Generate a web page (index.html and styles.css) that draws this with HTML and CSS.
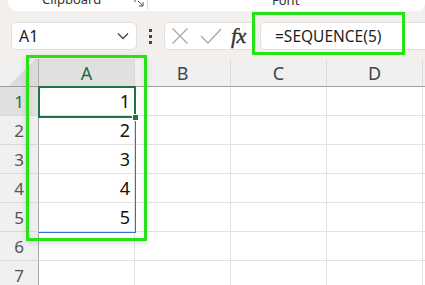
FILE: index.html
```html
<!DOCTYPE html>
<html>
<head>
<meta charset="utf-8">
<link rel="stylesheet" href="styles.css">
</head>
<body>
<div class="ribbon">
  <div class="group group-clip">
    <span class="group-label">Clipboard</span>
    <svg class="launcher" width="10" height="10" viewBox="0 0 10 10"><path d="M1 1h4M1 1v4M4 4l5 5M9 5v4H5" stroke="#555" stroke-width="1" fill="none"/></svg>
  </div>
  <div class="group group-font">
    <span class="group-label">Font</span>
  </div>
</div>

<div class="formula-row">
  <div class="namebox">
    <span class="ref">A1</span>
    <svg width="12" height="8" viewBox="0 0 12 8"><path d="M1 1.5l5 5 5-5" stroke="#444" stroke-width="1.3" fill="none"/></svg>
  </div>
  <div class="dots"><i></i><i></i><i></i></div>
  <div class="fbuttons">
    <svg width="18" height="18" viewBox="0 0 18 18"><path d="M1.5 1.5l15 15M16.5 1.5l-15 15" stroke="#a8a8a8" stroke-width="1.3" fill="none"/></svg>
    <svg width="22" height="18" viewBox="0 0 22 18"><path d="M1 9l7 7L21 2" stroke="#a8a8a8" stroke-width="1.3" fill="none"/></svg>
    <span class="fx">fx</span>
  </div>
  <div class="finput">=SEQUENCE(5)</div>
  <div class="hl hl-formula"></div>
</div>

<div class="sheet">
  <div class="grid">
    <div class="corner"></div>
    <div class="ch sel">A</div><div class="ch">B</div><div class="ch">C</div><div class="ch">D</div><div class="ch"></div>

    <div class="rh sel">1</div><div class="c num">1</div><div class="c"></div><div class="c"></div><div class="c"></div><div class="c"></div>
    <div class="rh">2</div><div class="c num">2</div><div class="c"></div><div class="c"></div><div class="c"></div><div class="c"></div>
    <div class="rh">3</div><div class="c num">3</div><div class="c"></div><div class="c"></div><div class="c"></div><div class="c"></div>
    <div class="rh">4</div><div class="c num">4</div><div class="c"></div><div class="c"></div><div class="c"></div><div class="c"></div>
    <div class="rh">5</div><div class="c num">5</div><div class="c"></div><div class="c"></div><div class="c"></div><div class="c"></div>
    <div class="rh">6</div><div class="c"></div><div class="c"></div><div class="c"></div><div class="c"></div><div class="c"></div>
    <div class="rh">7</div><div class="c"></div><div class="c"></div><div class="c"></div><div class="c"></div><div class="c"></div>
  </div>
  <div class="spill"></div>
  <div class="active"><span class="handle"></span></div>
  <div class="hl hl-col"></div>
</div>
</body>
</html>
```

FILE: styles.css
```css
* { box-sizing: border-box; }
html, body { margin: 0; padding: 0; }
body {
  width: 425px;
  height: 285px;
  overflow: hidden;
  background: #f3efec;
  font-family: "Noto Sans", "Open Sans", sans-serif;
  position: relative;
}

.ribbon {
  margin-left: 8px;
  height: 11px;
  background: #ffffff;
  border-radius: 0 0 8px 8px;
  display: flex;
  overflow: hidden;
}
.group {
  display: flex;
  align-items: flex-end;
  padding-bottom: 3px;
}
.group-clip {
  width: 140px;
  padding-left: 34px;
  border-right: 1px solid #dcdcdc;
  margin-bottom: 1px;
}
.group-label {
  font-size: 13px;
  line-height: 13px;
  color: #333;
  height: 7px;
  display: block;
  position: relative;
  top: -7px;
}
.launcher { margin-left: 33px; }
.group-font { padding-left: 124px; }

.formula-row {
  position: relative;
  display: flex;
  align-items: center;
  padding: 0 0 0 11px;
  margin-top: 11px;
  height: 28px;
}
.namebox {
  width: 126px;
  height: 28px;
  background: #fff;
  border: 1px solid #e3dfdc;
  border-radius: 5px;
  display: flex;
  align-items: center;
  justify-content: space-between;
  padding: 0 7px 0 7px;
}
.ref { font-size: 16px; color: #222; }
.dots {
  width: 27px;
  display: flex;
  flex-direction: column;
  align-items: center;
  gap: 3px;
}
.dots i { display: block; width: 3px; height: 3px; background: #444; }
.fbuttons {
  width: 92px;
  height: 28px;
  background: #fff;
  border: 1px solid #e3dfdc;
  border-radius: 5px;
  display: flex;
  align-items: center;
  gap: 11px;
  padding-left: 6px;
}
.fx {
  font-family: "Liberation Serif", serif;
  font-style: italic;
  font-size: 22px;
  color: #333;
  margin-left: -2px;
  letter-spacing: -0.5px;
  -webkit-text-stroke: 0.4px #333;
}
.finput {
  margin-left: 4px;
  flex: 1;
  height: 28px;
  background: #fff;
  border: 1px solid #e3dfdc;
  border-right: none;
  border-radius: 5px 0 0 5px;
  display: flex;
  align-items: center;
  padding-left: 14px;
  font-size: 15.5px;
  color: #1e1e1e;
}

.hl {
  position: absolute;
  border: 3px solid #27e214;
  pointer-events: none;
}
.hl-formula { left: 252px; top: -10px; width: 153px; height: 43px; }

.sheet {
  position: relative;
  margin-top: 9px;
  background: #fff;
}
.grid {
  display: grid;
  grid-template-columns: 39px 96px 96px 96px 96px 96px;
  grid-template-rows: 28px repeat(7, 29px);
  width: 425px;
  overflow: hidden;
}
.corner {
  background: #f0f0f0 linear-gradient(135deg, transparent 55%, #dcdcdc 55%) no-repeat;
  background-size: 100% 100%;
  border-right: 1px solid #b0b0b0;
  border-bottom: 1px solid #9f9f9f;
}
.ch {
  background: #f0f0f0;
  border-right: 1px solid #dadada;
  border-bottom: 1px solid #9f9f9f;
  display: flex;
  align-items: center;
  justify-content: center;
  font-size: 18px;
  color: #444;
}
.ch.sel { background: #e0e0e0; color: #1f6b45; }
.rh {
  background: #f0f0f0;
  border-right: 1px solid #a8a8a8;
  border-bottom: 1px solid #dadada;
  display: flex;
  align-items: center;
  justify-content: center;
  font-size: 17px;
  color: #555;
}
.rh.sel { background: #e0e0e0; color: #1f6b45; }
.c {
  border-right: 1px solid #e1e1e1;
  border-bottom: 1px solid #e1e1e1;
}
.num {
  display: flex;
  align-items: center;
  justify-content: flex-end;
  padding-right: 4px;
  font-size: 18px;
  color: #111;
}

.spill {
  position: absolute;
  left: 38px;
  top: 28px;
  width: 98px;
  height: 146px;
  border: 1px solid #3a6bd1;
  border-left-color: transparent;
}
.active {
  position: absolute;
  left: 38px;
  top: 27px;
  width: 98px;
  height: 32px;
  border: 2px solid #217346;
}
.handle {
  position: absolute;
  right: -5px;
  bottom: -5px;
  width: 7px;
  height: 7px;
  background: #217346;
  border: 1px solid #fff;
}
.hl-col {
  left: 26px;
  top: -4px;
  width: 121px;
  height: 186px;
  box-shadow: 0 2px 6px rgba(0,0,0,0.12), inset 0 0 5px rgba(0,0,0,0.08);
}
```
